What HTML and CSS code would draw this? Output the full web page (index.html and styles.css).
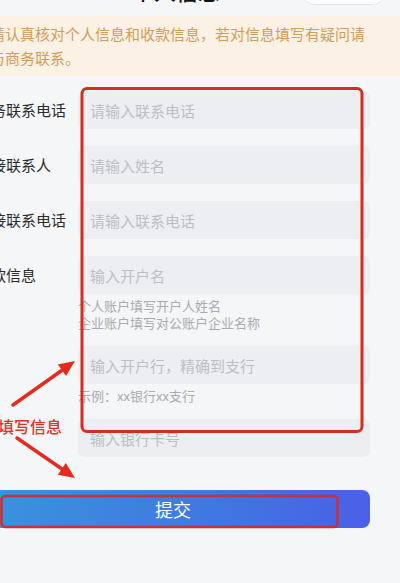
FILE: index.html
```html
<!DOCTYPE html>
<html lang="zh-CN">
<head>
<meta charset="utf-8">
<title>个人信息</title>
<link rel="stylesheet" href="styles.css">
</head>
<body>
<div class="page">
  <header class="topbar">
    <h1 class="title">个人信息</h1>
    <div class="pill"></div>
  </header>
  <div class="notice">请认真核对个人信息和收款信息，若对信息填写有疑问请与商务联系。</div>
  <form class="form">
    <div class="row">
      <label class="label">商务联系电话</label>
      <div class="field"><input class="input" placeholder="请输入联系电话"></div>
    </div>
    <div class="row">
      <label class="label">对接联系人</label>
      <div class="field"><input class="input" placeholder="请输入姓名"></div>
    </div>
    <div class="row">
      <label class="label">对接联系电话</label>
      <div class="field"><input class="input" placeholder="请输入联系电话"></div>
    </div>
    <div class="row">
      <label class="label">收款信息</label>
      <div class="field">
        <input class="input" placeholder="输入开户名">
        <p class="hint">个人账户填写开户人姓名<br>企业账户填写对公账户企业名称</p>
        <input class="input input-gap" placeholder="输入开户行，精确到支行">
        <p class="hint">示例：xx银行xx支行</p>
        <input class="input input-gap" placeholder="输入银行卡号">
      </div>
    </div>
    <button type="button" class="submit">提交</button>
  </form>
</div>
<div class="annot-text">填写信息</div>
<svg class="annotations" width="400" height="583" viewBox="0 0 400 583">
  <rect x="82" y="88.5" width="280" height="343" rx="5" fill="none" stroke="#d42d22" stroke-width="3"/>
  <rect x="1.5" y="496" width="336" height="31" rx="4" fill="none" stroke="#c8303a" stroke-width="2.5"/>
  <line x1="13" y1="405" x2="62" y2="370.3" stroke="#e62a1e" stroke-width="3.5" stroke-linecap="round"/>
  <polygon points="75,361 66,376 57.9,364.6" fill="#e62a1e"/>
  <line x1="17" y1="438" x2="62" y2="469" stroke="#e62a1e" stroke-width="3.5" stroke-linecap="round"/>
  <polygon points="75,478 57.8,474.7 65.8,463.1" fill="#e62a1e"/>
</svg>
</body>
</html>
```

FILE: styles.css
```css
html, body {
  margin: 0;
  padding: 0;
  overflow: hidden;
}
body {
  background: #f4f6f8;
  font-family: "Noto Sans CJK SC", "Noto Sans", sans-serif;
  color: #2b2b2b;
  position: relative;
  width: 400px;
  height: 583px;
}
.page {
  display: flow-root;
  margin-left: -24px;
  width: 424px;
}
.topbar {
  display: flex;
  align-items: flex-start;
  height: 34px;
  margin-top: -25px;
}
.title {
  margin: 0 0 0 156px;
  font-size: 22px;
  line-height: 30px;
  font-weight: 500;
  color: #111;
}
.pill {
  margin-left: auto;
  margin-right: 13px;
  width: 87px;
  height: 30px;
  box-sizing: border-box;
  background: #fff;
  border: 1px solid #e4e6e9;
  border-radius: 15px;
}
.notice {
  margin-top: 7px;
  background: #fbf2e5;
  color: #d29c5a;
  font-size: 15px;
  line-height: 24px;
  padding: 6px 30px 6px 14px;
}
.form {
  margin: 15px 0 0;
  padding-right: 30px;
}
.row {
  display: grid;
  grid-template-columns: 102px 1fr;
  margin-bottom: 17px;
}
.label {
  font-size: 15px;
  line-height: 38px;
  color: #2b2b2b;
  white-space: nowrap;
}
.field {
  display: flex;
  flex-direction: column;
}
.input {
  display: block;
  box-sizing: border-box;
  width: 100%;
  height: 38px;
  border: 0;
  outline: 0;
  border-radius: 6px;
  background: #eceef1;
  padding: 0 12px;
  font-family: "Noto Sans CJK SC", "Noto Sans", sans-serif;
  font-size: 15px;
  color: #333;
}
.input::placeholder {
  color: #bcbfc4;
}
.input-gap {
  margin-top: 15px;
}
.hint {
  margin: 3px 0 0;
  font-size: 13px;
  line-height: 17px;
  color: #a9acb0;
}
.submit {
  display: block;
  width: 100%;
  height: 38px;
  margin-top: 33px;
  border: 0;
  border-radius: 8px;
  background: linear-gradient(90deg, #3895de 0%, #4272e2 70%, #4a5fe8 100%);
  color: #fff;
  font-family: "Noto Sans CJK SC", "Noto Sans", sans-serif;
  font-size: 18px;
  line-height: 38px;
  padding: 0;
}
.annotations {
  position: absolute;
  left: 0;
  top: 0;
  pointer-events: none;
}
.annot-text {
  position: absolute;
  left: -2px;
  top: 415px;
  font-size: 16px;
  line-height: 22px;
  font-weight: 500;
  color: #e0302a;
  white-space: nowrap;
}
```
